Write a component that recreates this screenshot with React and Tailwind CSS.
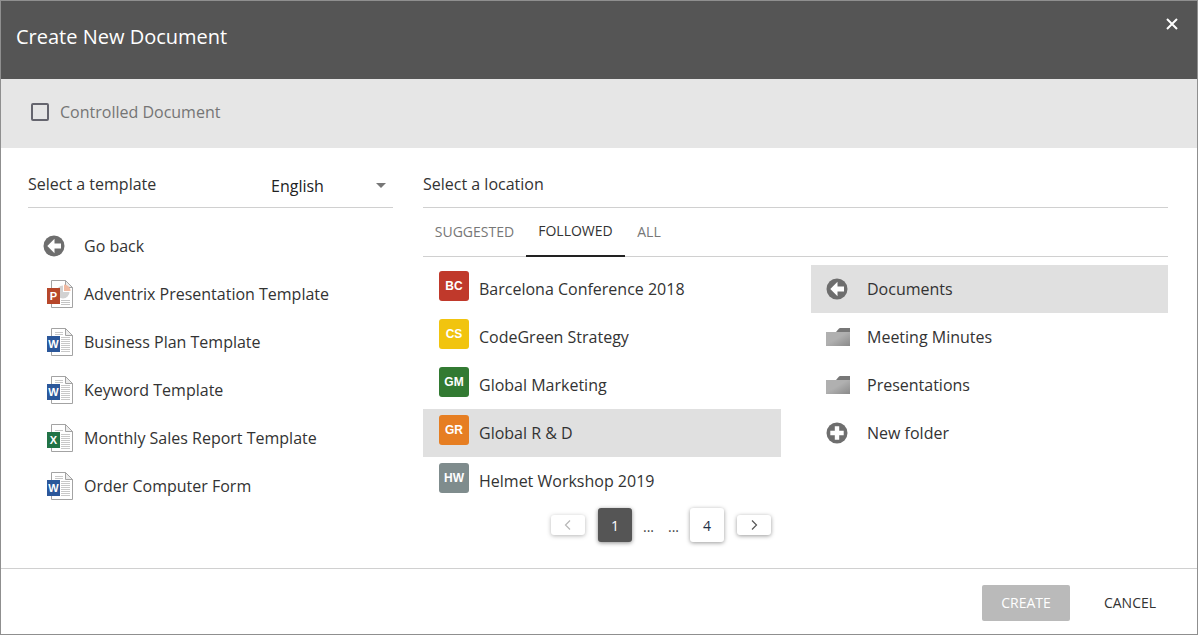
const font = { fontFamily: '"Open Sans", sans-serif' };

function CircleIcon({ kind }) {
  return (
    <svg width="22" height="22" viewBox="0 0 22 22" className="shrink-0">
      <circle cx="11" cy="11" r="10.500" fill="#6e6e6e" />
      {kind === "back" ? (
        <path d="M11.500 3.800 4.300 11l7.200 7.200 0-4.600h6.500v-5.200h-6.500z" fill="#fff" />
      ) : (
        <path d="M8.800 4.300h4.400v4.500h4.500v4.400h-4.500v4.500h-4.400v-4.500h-4.500v-4.400h4.500z" fill="#fff" />
      )}
    </svg>
  );
}

function FileIcon({ kind }) {
  const cfg = {
    p: { c: "#b7472a", l: "P" },
    w: { c: "#2b579a", l: "W" },
    x: { c: "#217346", l: "X" },
  }[kind];
  return (
    <svg width="27" height="28" viewBox="0 0 27 28" className="shrink-0">
      <path d="M4.500 .5h14l7 7v20h-21z" fill="#fff" stroke="#a3a3a3" />
      <path d="M18.500 .5v7h7z" fill="#ececec" stroke="#a3a3a3" />
      {kind === "p" ? (
        <>
          <path d="M16 5.500a6.500 6.500 0 1 0 6.500 6.500H16z" fill="#d2d2d2" />
          <path d="M17 4.500v6.500h6.500a6.500 6.500 0 0 0-6.500-6.500z" fill="#f0b9a0" />
          <path d="M14 20.500h9M14 22.500h9M14 24.500h9" stroke="#c4c4c4" />
        </>
      ) : kind === "x" ? (
        <path d="M8 6.500h8M14 10.500h9M14 12.500h9M14 14.500h9M14 16.500h9M14 18.500h9M14 20.500h9M14 22.500h9M14 24.500h9" stroke="#c8c8c8" />
      ) : (
        <path d="M8 4.500h8M8 6.500h8M14 9.500h9M14 11.500h9M14 13.500h9M14 15.500h9M14 17.500h9M14 19.500h9M14 21.500h9M14 23.500h9" stroke="#c8c8c8" />
      )}
      <rect x="0" y="8" width="13" height="16" fill={cfg.c} />
      <text x="6.500" y="20" textAnchor="middle" fontSize="11" fontWeight="700" fill="#fff" fontFamily="Liberation Sans, sans-serif">
        {cfg.l}
      </text>
    </svg>
  );
}

function FolderIcon({ id }) {
  return (
    <svg width="24" height="18" viewBox="0 0 24 18" className="shrink-0">
      <defs>
        <linearGradient id={id} x1="0" y1="0" x2="1" y2="1">
          <stop offset="0.450" stopColor="#b0b0b0" />
          <stop offset="1" stopColor="#8a8a8a" />
        </linearGradient>
      </defs>
      <path d="M10 4 13 .5Q13.500 0 14 0H24V4z" fill="#777" />
      <path d="M0 4h24v14H0z" fill={`url(#${id})`} />
    </svg>
  );
}

function Avatar({ text, color }) {
  return (
    <div className={`w-[30px] h-[30px] rounded-[3px] flex items-center justify-center text-white text-[12px] font-bold shrink-0 mb-[6px] ${color}`} style={{ fontFamily: '"Liberation Sans", sans-serif' }}>
      {text}
    </div>
  );
}

function Row({ icon, label, active, iconBox = "w-[56px] pl-[16px]" }) {
  return (
    <div className={`h-[48px] flex items-center text-[16px] text-[#333] ${active ? "bg-[#e0e0e0]" : ""}`}>
      <div className={`shrink-0 flex items-center ${iconBox}`}>{icon}</div>
      <span>{label}</span>
    </div>
  );
}

function PageBtn({ children, tall, active, dim }) {
  return (
    <div
      className={`w-[34px] rounded-[3px] flex items-center justify-center text-[14px] ${tall ? "h-[34px]" : "h-[20px]"} ${
        active ? "bg-[#555] text-white shadow-[0_1px_4px_rgba(0,0,0,0.45)]" : "bg-white text-[#1f2f45] shadow-[0_1px_4px_rgba(0,0,0,0.4)]"
      } ${dim ? "opacity-70" : ""}`}
    >
      {children}
    </div>
  );
}

export default function App() {
  const templates = [
    ["p", "Adventrix Presentation Template"],
    ["w", "Business Plan Template"],
    ["w", "Keyword Template"],
    ["x", "Monthly Sales Report Template"],
    ["w", "Order Computer Form"],
  ];
  const locations = [
    ["BC", "bg-[#c0392b]", "Barcelona Conference 2018"],
    ["CS", "bg-[#f1c40f]", "CodeGreen Strategy"],
    ["GM", "bg-[#327a32]", "Global Marketing"],
    ["GR", "bg-[#e67e22]", "Global R & D", true],
    ["HW", "bg-[#7f8c8d]", "Helmet Workshop 2019"],
  ];
  return (
    <div style={font} className="w-[1198px] h-[635px] bg-white border border-[#8f8f8f] flex flex-col overflow-hidden">
      <header className="h-[78px] shrink-0 bg-[#555] flex items-center justify-between pl-[15px] pr-[19px]">
        <h1 className="text-[20px] text-white font-normal mb-[6px]">Create New Document</h1>
        <svg width="12" height="12" viewBox="0 0 12 12" className="mb-[33px]">
          <path d="M1 1l10 10M11 1 1 11" stroke="#fff" strokeWidth="2" />
        </svg>
      </header>
      <div className="h-[69px] shrink-0 bg-[#e6e6e6] flex items-center pl-[30px] pb-[4px] gap-[11px]">
        <div className="w-[18px] h-[18px] border-2 border-[#65656e] rounded-[2px]" />
        <span className="text-[16px] text-[#757575]">Controlled Document</span>
      </div>
      <main className="flex-1 flex pl-[27px] pr-[29px] gap-[30px] min-h-0">
        <section className="w-[365px] shrink-0">
          <div className="h-[60px] pt-[13px] border-b border-[#d0d0d0] flex items-center justify-between text-[16px] text-[#333]">
            <span>Select a template</span>
            <div className="flex items-center w-[122px] justify-between pr-[7px] pt-[3px]">
              <span className="text-[#222]">English</span>
              <span className="w-0 h-0 border-l-[5px] border-r-[5px] border-t-[5px] border-l-transparent border-r-transparent border-t-[#777]" />
            </div>
          </div>
          <div className="pt-[14px]">
            <Row icon={<CircleIcon kind="back" />} label="Go back" iconBox="w-[56px] pl-[15px]" />
            {templates.map(([k, l]) => (
              <Row key={l} icon={<FileIcon kind={k} />} label={l} iconBox="w-[56px] pl-[19px]" />
            ))}
          </div>
        </section>
        <section className="flex-1 min-w-0">
          <div className="h-[60px] pt-[13px] border-b border-[#d0d0d0] flex items-center text-[16px] text-[#333]">
            <span>Select a location</span>
          </div>
          <div className="h-[49px] border-b border-[#d0d0d0] flex text-[14px] text-[#777]">
            <div className="w-[103px] flex items-center justify-center pb-[2px]">SUGGESTED</div>
            <div className="w-[99px] flex items-center justify-center text-[#333] border-b-2 border-[#222] h-[49px] pb-[3px]">FOLLOWED</div>
            <div className="w-[48px] flex items-center justify-center pb-[2px]">ALL</div>
          </div>
          <div className="flex gap-[30px] pt-[8px]">
            <div className="w-[358px] shrink-0">
              {locations.map(([a, c, l, act]) => (
                <Row key={a} active={act} icon={<Avatar text={a} color={c} />} label={l} />
              ))}
              <div className="flex items-center justify-end pr-[10px] gap-[13px] h-[34px] mt-[3px] text-[14px] text-[#333]">
                <PageBtn dim>
                  <svg width="8" height="10" viewBox="0 0 8 10"><path d="M6 .5 1.500 5 6 9.500" fill="none" stroke="#999" strokeWidth="1.200" /></svg>
                </PageBtn>
                <PageBtn tall active>1</PageBtn>
                <div className="w-[36px] mx-[-2px] flex justify-between text-[#444] pt-[3px]"><span>...</span><span>...</span></div>
                <PageBtn tall>4</PageBtn>
                <PageBtn>
                  <svg width="8" height="10" viewBox="0 0 8 10"><path d="M2 .5 6.500 5 2 9.500" fill="none" stroke="#555" strokeWidth="1.200" /></svg>
                </PageBtn>
              </div>
            </div>
            <div className="flex-1 min-w-0">
              <Row active icon={<CircleIcon kind="back" />} label="Documents" iconBox="w-[56px] pl-[15px]" />
              <Row icon={<FolderIcon id="fa" />} label="Meeting Minutes" iconBox="w-[56px] pl-[15px]" />
              <Row icon={<FolderIcon id="fb" />} label="Presentations" iconBox="w-[56px] pl-[15px]" />
              <Row icon={<CircleIcon kind="plus" />} label="New folder" iconBox="w-[56px] pl-[15px]" />
            </div>
          </div>
        </section>
      </main>
      <footer className="h-[66px] shrink-0 border-t border-[#d0d0d0] flex items-center justify-end pr-[19px] pt-[2px] text-[14px]">
        <div className="w-[88px] h-[36px] rounded-[2px] bg-[#bababa] text-white flex items-center justify-center">CREATE</div>
        <div className="w-[96px] h-[36px] text-[#333] flex items-center justify-center ml-[12px]">CANCEL</div>
      </footer>
    </div>
  );
}
